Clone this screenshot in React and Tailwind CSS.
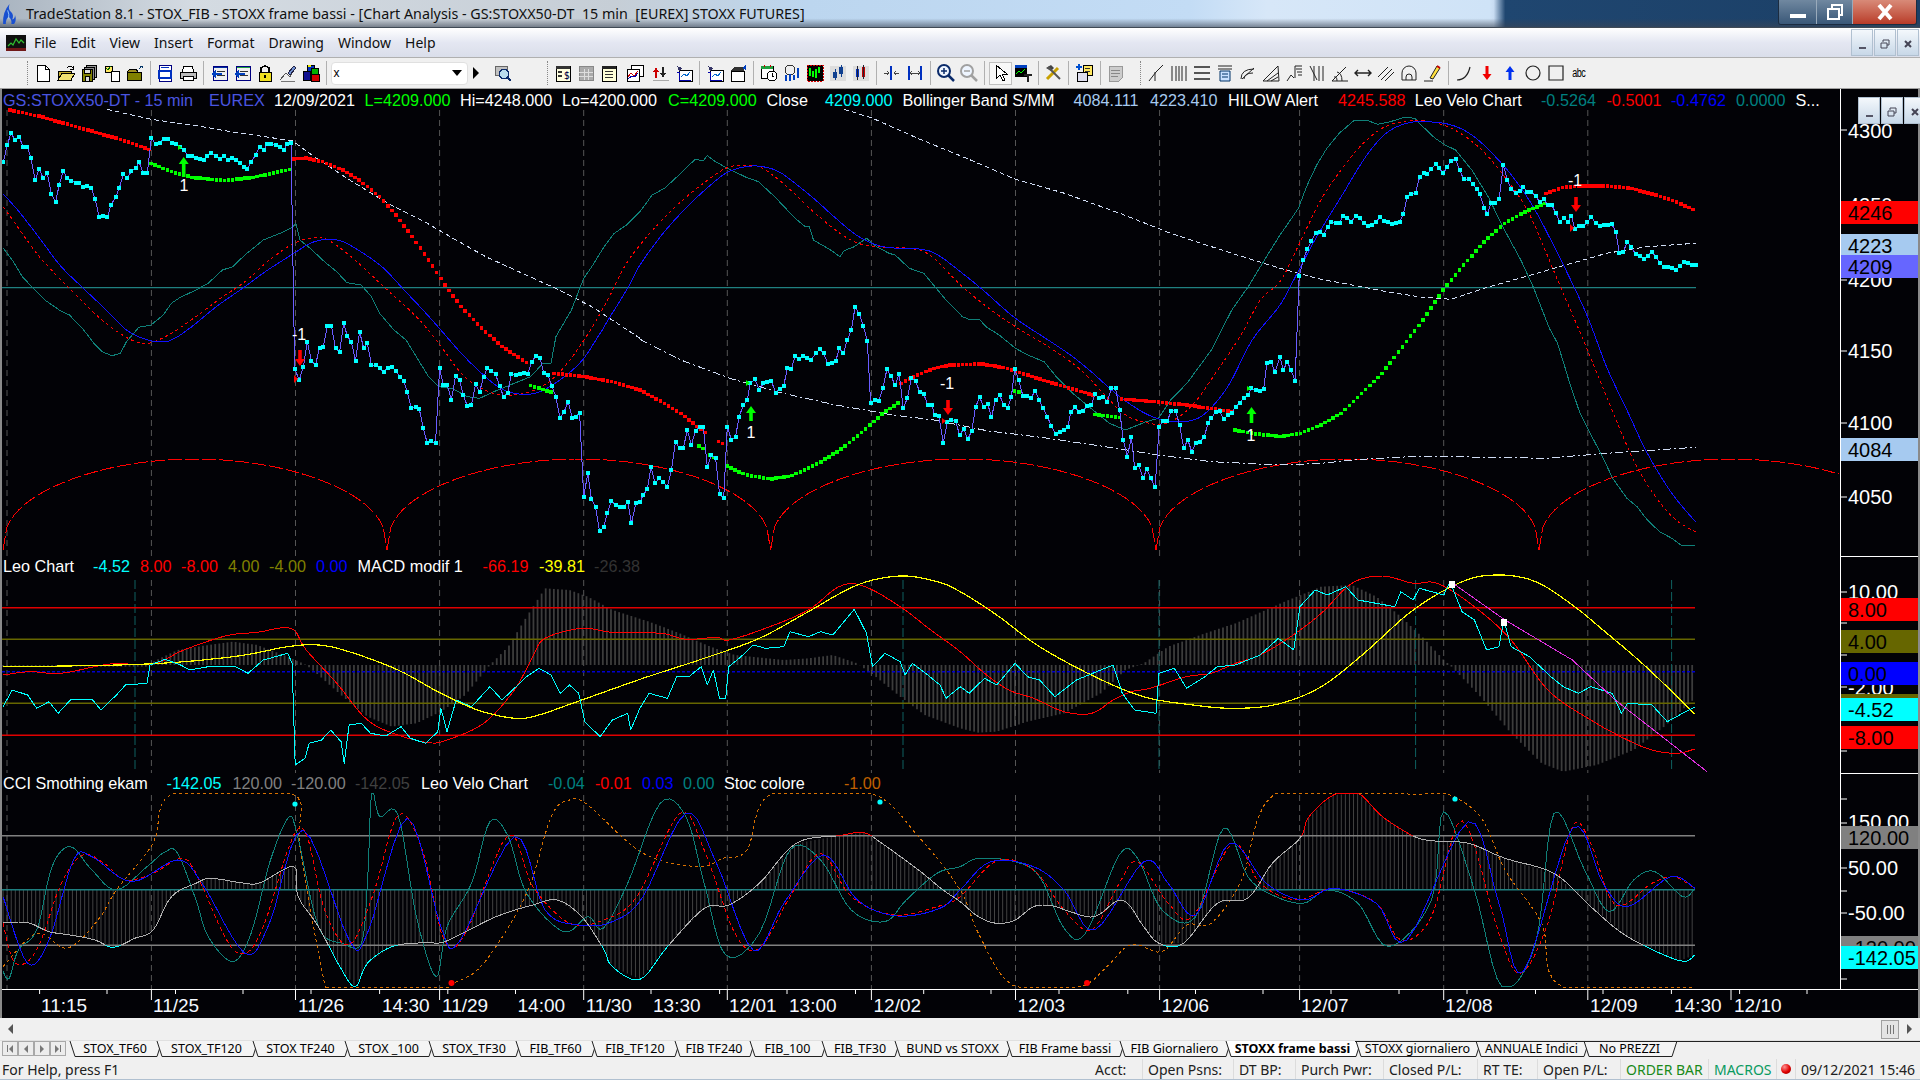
import React from 'react';

// crop coordinates -> page coordinates
const pts = (x0, sx, y0, str) =>
  str.trim().split(/\s+/).map((p) => {
    const [a, b] = p.split(',').map(Number);
    return [x0 + a / sx, y0 + b / 3];
  });
const p1 = (x0, str) => pts(x0, 2.45, 90, str);
const p2 = (x0, str) => pts(x0, 1.633, 550, str);
const join = (...a) => a.flat();
const ptStr = (a) => a.map((p) => p[0].toFixed(1) + ',' + p[1].toFixed(1)).join(' ');

const sample = (line, step) => {
  const out = [];
  let i = 0;
  for (let x = line[0][0]; x <= line[line.length - 1][0]; x += step) {
    while (i < line.length - 2 && line[i + 1][0] < x) i++;
    const [ax, ay] = line[i];
    const [bx, by] = line[i + 1];
    const t = bx === ax ? 0 : (x - ax) / (bx - ax);
    out.push([x, ay + (by - ay) * t]);
  }
  return out;
};

// catmull-rom, the averages are round curves in the picture
const smooth = (l, n = 6) => {
  const out = [];
  for (let i = 0; i < l.length - 1; i++) {
    const a = l[Math.max(i - 1, 0)];
    const b = l[i];
    const c = l[i + 1];
    const d = l[Math.min(i + 2, l.length - 1)];
    for (let k = 0; k < n; k++) {
      const t = k / n;
      const f = (j) =>
        0.5 * (2 * b[j] + (c[j] - a[j]) * t + (2 * a[j] - 5 * b[j] + 4 * c[j] - d[j]) * t * t + (3 * b[j] - a[j] - 3 * c[j] + d[j]) * t * t * t);
      out.push([f(0), f(1)]);
    }
  }
  out.push(l[l.length - 1]);
  return out;
};
// the oscillators are flat at their limits, the spline must not overshoot them
const clampY = (l, lo, hi) => l.map(([x, y]) => [x, Math.min(hi, Math.max(lo, y))]);

const price = join(
  p1(0, `8,215 18,165 27,130 37,150 47,142 57,170 67,172 76,205 86,270 96,238 106,265 116,250 126,312 136,337 145,285 155,243 165,265 175,272 185,278 194,280 204,292 214,287 224,295 233,328 243,380 253,378 263,382 272,345 283,322 292,295 302,253 312,265 322,243 332,235 341,217 351,250 361,250 371,143 381,162 391,158 401,148 411,146 421,158 431,162 441,172 450,180 460,197 470,197 480,204 490,207 500,210 508,198 518,190 528,197 538,208 548,198 558,210 568,205 578,210 588,220 598,230 606,238 616,215 626,195 636,172 646,180 655,163 665,163 675,165 685,172 695,180 703,163 713,158 722,836 733,870 743,832 753,755 763,812 773,825 783,773 792,772 802,708 812,708 822,775 832,787 842,700 851,738 861,755 871,812 881,725 891,775 900,758 910,825 920,825 930,835 940,845 950,833 960,830 970,843 979,860 989,872 998,905 1008,955 1018,950 1027,956 1037,1015 1047,1060 1057,1053 1067,1060 1077,835 1086,885 1096,885 1106,930 1116,858 1126,870 1135,915 1145,948 1155,945 1165,883 1175,905 1185,860 1194,835 1204,842 1214,853 1224,887 1234,922 1244,908 1253,853 1263,855 1273,852 1283,850 1293,852 1303,815 1313,797 1323,803 1332,848 1342,855 1352,887 1362,920 1372,985 1382,965 1392,935 1402,985 1412,980 1420,968 1430,1220 1440,1150 1449,1228 1459,1250 1469,1323 1479,1312 1488,1270 1498,1232 1508,1245 1518,1250 1528,1250 1538,1235 1547,1300 1558,1240`),
  p1(640, `0,1235 8,1215 18,1198 27,1130 37,1180 47,1165 57,1175 67,1190 77,1140 87,1055 97,1075 106,1075 116,1020 126,1065 136,1022 146,1010 155,1010 165,1132 175,1095 185,1103 195,1212 205,1225 214,1010 224,1050 234,1040 243,980 253,945 263,930 270,880 282,868 292,900 302,880 312,875 322,872 332,908 342,897 352,888 361,835 371,838 380,797 390,807 400,797 410,803 420,810 430,790 440,778 450,790 460,822 470,820 480,812 488,775 498,790 508,750 518,720 527,650 537,672 547,708 557,752 565,940 575,930 585,932 595,895 605,838 615,858 625,885 635,853 645,955 655,925 665,865 675,873 685,905 695,912 705,945 715,945 722,975 732,977 743,1060 753,995 763,990 773,992 783,1035 793,1017 803,1047 813,1022 822,952 832,922 842,950 852,942 861,982 871,930 881,915 891,945 901,955 910,920 918,838 928,870 938,918 948,918 958,925 968,902 978,930 988,955 998,980 1008,1008 1018,1033 1028,1025 1038,1020 1048,1010 1056,965 1066,952 1076,965 1086,962 1096,948 1106,945 1115,912 1125,925 1135,920 1145,935 1155,895 1165,895 1175,960 1184,1050 1194,1100 1204,1042 1212,1135 1222,1125 1232,1165 1242,1138 1252,1165 1262,1192 1272,1010 1282,992 1292,992 1302,962 1312,962 1322,1005 1332,1075 1342,1050 1352,1085 1362,1060 1372,1055 1382,1042 1392,998 1400,985 1410,965 1420,962 1430,988 1440,975 1450,968 1459,950 1469,938 1479,925 1489,915 1498,895 1508,900 1518,902 1528,897 1536,820 1546,815 1556,847`),
  p1(1280, `0,800 8,840 18,815 27,840 37,873 47,557 57,510 67,477 77,453 87,430 97,425 107,435 117,410 126,395 136,398 146,398 155,378 165,385 175,395 185,378 195,385 205,398 215,408 225,405 235,395 245,382 255,392 265,395 275,402 285,398 293,395 302,373 312,320 322,312 332,308 342,262 352,250 361,252 371,238 381,222 390,235 400,250 410,230 420,212 430,208 440,240 450,268 462,268 472,283 482,298 490,313 500,353 508,372 517,340 527,340 537,327 547,225 557,270 567,297 577,308 587,303 596,290 606,305 616,305 626,318 636,335 646,328 656,345 666,345 676,370 686,395 696,385 706,395 714,377 722,417 733,408 743,408 753,397 763,380 773,400 783,408 793,405 803,405 813,403 823,425 831,488 841,485 851,455 861,470 871,493 881,497 891,508 901,497 911,485 921,500 930,518 940,530 950,530 960,535 970,540 980,528 990,517 1000,520 1010,525 1018,525`)
);

const teal1 = join(
  p1(0, `8,475 30,510 55,560 85,600 110,630 145,660 170,675 205,720 230,760 250,785 275,797 295,790 310,755 340,712 370,705 400,675 420,640 440,623 480,600 510,580 545,540 570,530 600,495 645,450 690,428 716,412 725,400 735,450 760,475 795,515 825,545 850,578 885,585 910,620 930,670 965,720 995,750 1020,800 1050,860 1075,890 1110,897 1145,920 1175,925 1210,905 1260,880 1300,860 1330,820 1350,820 1362,740 1400,660 1430,565 1450,530 1480,470 1505,430 1535,405 1568,365`),
  p1(640, `30,315 60,295 100,250 135,208 155,212 165,197 185,215 210,232 260,262 290,275 330,320 380,385 405,410 415,410 425,450 470,482 490,500 500,482 525,470 555,445 580,470 610,490 625,495 660,535 695,550 750,630 790,680 810,690 830,687 850,712 880,735 920,775 950,795 990,815 1020,860 1060,910 1100,950 1150,1000 1190,1020 1240,995 1270,985 1300,930 1340,880 1400,780 1450,660 1490,590 1540,490 1568,435`),
  p1(1280, `20,400 45,355 65,290 90,225 115,175 145,130 180,93 215,92 240,103 270,95 305,82 330,85 350,110 380,145 405,165 430,180 470,240 510,320 550,420 590,510 620,590 660,715 680,760 710,880 735,970 760,1030 790,1100 815,1165 850,1225 875,1250 900,1290 930,1325 960,1345 985,1367 1018,1365`)
);
const blue1 = join(
  p1(0, `8,312 50,370 100,450 150,530 200,590 260,660 310,720 350,745 385,755 420,750 470,710 530,650 600,590 650,545 720,490 760,460 800,448 840,455 890,490 940,535 990,600 1040,665 1080,720 1130,790 1180,850 1220,890 1260,910 1310,910 1360,880 1420,820 1460,750 1500,670 1540,590 1568,525`),
  p1(640, `50,440 100,370 150,310 210,250 260,230 300,230 340,245 380,280 430,330 480,385 530,435 580,465 630,475 690,478 730,495 790,550 840,600 920,685 1000,750 1060,800 1110,850 1170,915 1230,965 1280,990 1330,995 1380,975 1440,890 1500,750 1568,645`),
  p1(1280, `40,555 90,440 150,320 210,200 260,130 310,100 360,95 420,105 470,135 520,190 570,260 620,350 680,490 750,670 800,830 850,960 900,1090 960,1210 1018,1295`)
);
const red1 = join(
  p1(0, `8,350 40,405 90,490 130,545 190,620 250,690 300,735 340,758 370,758 420,730 480,680 540,625 600,575 660,510 720,460 760,445 800,448 860,500 940,590 1020,680 1075,760 1130,850 1180,895 1230,915 1300,905 1360,860 1420,770 1480,650 1530,530 1568,465`),
  p1(640, `50,395 100,335 150,285 210,235 260,225 300,235 360,290 420,360 490,430 540,462 600,472 660,475 710,495 790,590 860,660 920,710 1000,770 1080,840 1150,930 1190,975 1240,998 1290,1000 1350,950 1410,850 1470,740 1520,630 1568,575`),
  p1(1280, `40,480 100,330 150,240 200,165 250,115 300,95 350,92 420,115 490,175 550,260 610,370 680,570 750,770 810,950 870,1120 920,1220 970,1290 1018,1325`)
);
const bandA = p1(0, `262,58 370,88 470,105 590,130 716,152 770,200 850,265 950,340 1040,395 1110,445 1190,500 1280,550 1370,600 1450,650 1568,745`);
const bandB = join(
  p1(640, `500,58 570,85 680,145 800,205 920,268 1040,310 1180,372 1300,430 1450,490 1568,535`),
  p1(1280, `100,568 200,590 260,605 350,622 420,628 500,595 600,560 700,525 800,490 900,470 1018,460`)
);
const bandC = join(
  p1(640, `0,748 100,810 220,865 350,910 480,945 620,975 720,990 850,1022 1000,1045 1150,1072 1270,1095 1400,1115 1568,1125`),
  p1(1280, `100,1120 200,1108 350,1098 500,1102 650,1105 800,1090 1018,1072`)
);

const redDots = [
  p1(0, `25,60 100,80 200,115 300,150 365,178`),
  p1(0, `720,207 750,204 790,215 840,240 880,270 930,320 970,375 1010,440 1050,510 1090,585 1130,650 1180,715 1230,770 1295,822`),
  join(p1(0, `1358,850 1430,860 1500,875 1568,900`), p1(640, `60,940 100,970 135,1005 165,1032`)),
  p1(640, `192,1055 205,1062`),
  p1(640, `640,880 680,855 720,835 760,825 840,822 900,835 960,860 1040,890 1110,915`),
  p1(640, `1180,927 1260,935 1340,945 1450,965`),
  p1(1280, `652,310 690,293 740,288 800,288 860,295 920,315 970,335 1018,362`),
];
const greenDots = [
  p1(0, `370,220 420,245 470,262 550,272 620,262 716,237`),
  p1(0, `1300,887 1352,907`),
  p1(640, `145,1068 158,1078`),
  p1(640, `172,1095 185,1105`),
  p1(640, `213,1128 260,1155 320,1167 370,1158 430,1125 490,1080 550,1020 600,965 635,938`),
  p1(640, `918,903 932,907`),
  p1(640, `1115,973 1175,982`),
  join(p1(640, `1458,1020 1500,1030 1568,1040`), p1(1280, `50,1030 100,1005 150,970 200,910 250,850 300,770 350,690 400,600 450,525 500,455 550,400 600,365 650,340`)),
];

const hist2 = join(
  p2(0, `5,350 240,350 250,335 290,300 340,285 380,275 420,285 470,320 500,345 520,375 560,440 600,500 640,530 680,520 720,485 760,435 800,345 830,290 860,200 890,115 930,120 960,140 1000,180 1060,215 1110,250 1160,290 1200,315 1280,330 1320,325 1360,315 1400,340 1430,380 1470,440 1510,495 1568,535`),
  p2(960, `30,548 60,545 110,515 170,490 230,430 270,360 300,340 340,290 400,250 450,220 530,155 590,110 640,105 680,140 720,200 760,270 790,330 800,345 850,440 900,550 950,640 985,665 1040,645 1100,600 1150,530 1200,445`)
);
const red2 = join(
  p2(0, `5,375 50,365 100,370 180,342 250,342 300,300 370,257 420,247 475,235 500,300 550,400 600,510 650,555 700,578 730,570 790,520 840,420 870,320 890,265 950,235 1000,247 1080,250 1120,268 1170,262 1190,270 1250,235 1320,180 1370,110 1410,108 1470,170 1520,240 1568,305`),
  p2(960, `40,370 80,420 120,445 170,485 215,490 250,450 280,425 310,415 370,380 410,370 450,340 490,315 540,260 590,190 640,100 690,78 740,100 780,100 840,170 900,270 960,420 1030,510 1090,570 1130,600 1170,610 1200,597`)
);
const yellow2 = join(
  p2(0, `5,350 140,347 240,342 320,332 400,315 470,290 520,285 570,305 650,360 720,430 780,480 840,505 880,495 950,450 1050,385 1150,325 1240,265 1320,185 1400,105 1470,78 1530,95 1568,125`),
  p2(960, `60,195 130,290 220,380 300,440 380,465 450,475 520,462 590,410 660,310 740,180 820,95 880,75 940,95 1000,165 1050,240 1120,350 1200,492`)
);
const cyan2 = join(
  p2(0, `5,470 20,420 45,435 60,475 80,455 95,490 115,450 150,447 165,480 190,435 205,405 240,400 245,345 270,328 295,345 310,360 340,350 385,350 405,370 430,330 470,310 477,340 482,645 498,625 505,580 525,570 540,540 557,575 562,640 570,525 590,520 605,550 630,558 655,530 670,565 695,580 715,545 720,475 730,545 745,450 770,470 800,410 820,450 860,380 880,355 900,375 915,430 930,405 945,430 955,515 980,560 1000,510 1025,490 1030,540 1045,475 1060,430 1090,445 1105,380 1125,380 1145,350 1155,405 1165,360 1175,445 1185,445 1190,350 1210,320 1230,285 1250,295 1280,290 1290,245 1320,260 1340,245 1360,255 1395,178 1415,250 1425,350 1445,310 1470,335 1478,375 1490,340 1515,375 1535,405 1545,445 1568,410`),
  p2(960, `15,430 40,385 60,405 90,340 110,380 130,390 155,440 190,390 250,345 265,430 285,480 320,490 325,370 350,355 370,415 400,380 420,350 450,345 490,315 520,265 545,300 555,170 580,120 600,135 630,110 650,150 710,170 720,125 740,150 750,115 790,135 800,95 820,185 840,210 860,300 880,290 888,210 900,290 930,320 965,380 985,410 1010,430 1030,410 1065,430 1080,490 1090,460 1130,465 1155,515 1190,480 1200,472`)
);

const cci = join(
  p2(0, `5,1118 45,1118 80,1145 115,1155 155,1170 185,1192 220,1165 250,1140 280,1040 320,1000 345,985 400,1000 425,998 480,950 487,1040 520,1130 555,1250 580,1310 600,1240 640,1190 690,1178 720,1178 750,1155 810,1100 870,1065 910,1050 950,1100 985,1195 1000,1250 1045,1288 1090,1190 1150,1075 1190,1065 1240,1000 1300,880 1370,857 1410,848 1440,880 1500,960 1540,1020 1568,1055`),
  p2(960, `30,1100 60,1120 90,1110 120,1070 150,1067 180,1085 220,1100 265,1050 300,1130 325,1180 365,1180 420,1060 470,1045 510,940 555,865 570,800 610,735 650,730 690,800 740,858 770,872 830,880 890,925 970,970 1030,1070 1090,1160 1175,1232 1200,1215`)
);
const teal3 = join(
  p2(0, `5,1265 15,1285 30,1200 60,1140 85,950 115,890 150,960 190,1020 240,950 270,905 290,910 320,1050 340,1160 380,1235 410,1150 440,940 470,805 485,850 520,1130 560,1180 590,1180 600,1000 607,730 620,800 650,795 680,1100 712,1280 730,1130 770,1000 800,815 830,860 860,1030 920,1145 960,1100 985,1135 1025,1000 1078,760 1120,800 1150,1000 1185,1215 1240,1150 1290,900 1340,930 1390,1080 1445,1115 1480,1050 1530,970 1568,950`),
  p2(960, `30,925 90,935 130,980 170,1135 205,1150 260,915 290,925 330,1080 385,1100 430,835 470,980 510,1035 560,1060 600,1020 650,1060 700,1190 770,1050 790,785 840,1020 885,1310 940,1180 970,790 1020,960 1060,1085 1100,990 1135,965 1180,1040 1200,1015`)
);
const red3 = join(
  p2(0, `5,1120 25,1240 60,1200 100,1000 135,915 170,940 205,990 250,970 295,925 320,970 370,1170 400,1210 430,1130 490,830 530,1080 570,1185 610,1030 650,795 690,900 725,1170 760,1150 830,855 870,1010 930,1120 985,1110 1040,1040 1110,790 1150,900 1200,1150 1240,1195 1290,1040 1340,910 1390,1040 1460,1095 1530,1070 1568,1040`),
  p2(960, `60,932 120,960 170,1080 215,1140 260,1000 290,935 340,1060 380,1100 445,880 490,1000 550,1050 610,1015 680,1060 720,1170 770,1100 820,812 880,1150 915,1270 960,1120 1000,830 1030,880 1070,1065 1130,1000 1165,980 1200,1015`)
);
const blue3 = join(
  p2(0, `5,1040 45,1240 80,1170 120,930 150,920 215,995 290,930 330,1000 400,1210 440,1120 495,840 570,1170 600,1150 665,805 720,1130 750,1175 840,860 890,1080 945,1125 1000,1115 1050,1040 1120,790 1170,940 1230,1200 1280,1060 1345,915 1400,1050 1465,1098 1535,1075 1568,1020`),
  p2(960, `50,935 120,950 170,1020 220,1140 300,935 340,1000 385,1095 440,880 500,1000 560,1050 610,1015 680,1060 730,1170 830,815 880,1060 920,1265 1000,835 1050,1000 1090,1070 1160,980 1200,1015`)
);
const orange3 = join(
  p2(0, `5,1250 60,1150 110,1195 160,1110 190,1020 250,880 285,728 475,728 490,900 530,1300 545,1312 720,1312 740,1300 790,1240 860,1030 900,800 930,750 960,765 1050,910 1140,950 1180,925 1220,900 1260,730 1420,728 1500,860 1568,1020`),
  p2(960, `30,1150 85,1305 180,1312 210,1300 240,1250 280,1183 330,1205 370,1125 410,1120 460,990 515,730 700,728 745,735 790,728 850,800 890,960 950,1120 985,1312 1200,1312`)
);

const DAYS = [7, 151.4, 295.5, 439.6, 583.7, 727.3, 871.4, 1015.5, 1159.6, 1299.6, 1443.7, 1587.8];

const Line = ({ p, c, w = 1, d }) => (
  <polyline points={ptStr(p)} fill="none" stroke={c} strokeWidth={w} strokeDasharray={d} strokeLinejoin="round" shapeRendering="crispEdges" />
);
const Squares = ({ p, c, s = 4 }) => (
  <g fill={c} shapeRendering="crispEdges">
    {p.map((q, i) => (
      <rect key={i} x={q[0] - s / 2} y={q[1] - s / 2} width={s} height={s} />
    ))}
  </g>
);
const Bars = ({ line, base, c, w, step = 4.08 }) => (
  <g stroke={c} strokeWidth={w}>
    {sample(line, step).map((q, i) => (
      <line key={i} x1={q[0]} x2={q[0]} y1={base} y2={q[1]} />
    ))}
  </g>
);
const HLine = ({ y, c, d, w = 1.5 }) => <line x1="2" x2="1695" y1={y} y2={y} stroke={c} strokeWidth={w} strokeDasharray={d} />;
const DayLines = ({ top, bottom }) => (
  <g stroke="#555" strokeDasharray="6 4">
    {DAYS.map((x) => (
      <line key={x} x1={x} x2={x} y1={top} y2={bottom} />
    ))}
  </g>
);
const Up = ({ x, y0, y1 }) => <polygon fill="#00ff00" points={`${x},${y0} ${x + 5},${y0 + 7} ${x + 1.8},${y0 + 7} ${x + 1.8},${y1} ${x - 1.8},${y1} ${x - 1.8},${y0 + 7} ${x - 5},${y0 + 7}`} />;
const Down = ({ x, y0, y1 }) => <polygon fill="#ff0000" points={`${x},${y1} ${x + 5},${y1 - 7} ${x + 1.8},${y1 - 7} ${x + 1.8},${y0} ${x - 1.8},${y0} ${x - 1.8},${y1 - 7} ${x - 5},${y1 - 7}`} />;
const Lbl = ({ x, y, children }) => (
  <text x={x} y={y} fill="#fff" fontSize="16" textAnchor="middle">
    {children}
  </text>
);

// long arches along the bottom of the price pane
const arch = (x0, x1, from = 0, to = 1) => {
  const out = [];
  for (let t = from; t <= to + 0.0001; t += 0.01) {
    out.push([x0 + (x1 - x0) * t, 459 + 91 * (1 - Math.pow(Math.sin(Math.PI * Math.min(t, 1)), 0.4))]);
  }
  return out;
};

function PricePlot() {
  return (
    <svg viewBox="2 89 1838 467" className="block w-[1838px] h-[467px]">
      <DayLines top={110} bottom={556} />
      <line x1="2" x2="1696" y1="287.7" y2="287.7" stroke="#1f8080" strokeWidth="1.2" />
      {[[3, 387], [387, 770.6], [770.6, 1156], [1156, 1539]].map(([a, b]) => (
        <Line key={a} p={arch(a, b)} c="#ff0000" d="14 3" />
      ))}
      <Line p={arch(1539, 1923, 0, 0.78)} c="#ff0000" d="14 3" />
      <Line p={bandA} c="#d0dcf4" d="5 3" />
      <Line p={bandB} c="#d0dcf4" d="5 3" />
      <Line p={bandC} c="#d0dcf4" d="8 3 2 3" />
      <Line p={teal1} c="#0f8078" />
      <Line p={smooth(red1)} c="#ff0000" d="3 3" />
      <Line p={smooth(blue1)} c="#1010ff" />
      {redDots.map((l, i) => (
        <Squares key={i} p={sample(l, 4.08)} c="#ff0000" s={3.6} />
      ))}
      {greenDots.map((l, i) => (
        <Squares key={i} p={sample(l, 4.08)} c="#00ff00" s={3.6} />
      ))}
      <Line p={price} c="#6a5cff" />
      <Squares p={price} c="#00ffff" />
      <Up x={183.7} y0={157} y1={177} />
      <Up x={751} y0={406} y1={421} />
      <Up x={1251.5} y0={407} y1={423} />
      <Down x={300} y0={350} y1={366} />
      <Down x={948} y0={400} y1={415} />
      <Down x={1576} y0={197} y1={212} />
      <polygon fill="#00ff00" points="178,145 182,147.5 178,150" />
      <polygon fill="#00ff00" points="746,380 750,383 746,386" />
      <polygon fill="#00ff00" points="1247,386 1251,388.5 1247,391" />
      <polygon fill="#ff0000" points="294,375 298,379 294,383" />
      <polygon fill="#ff0000" points="942,418 946,421 942,424" />
      <polygon fill="#ff0000" points="1570,224 1574,228 1570,232" />
      <Lbl x={184} y={191}>1</Lbl>
      <Lbl x={751} y={438}>1</Lbl>
      <Lbl x={1251} y={441}>1</Lbl>
      <Lbl x={299} y={340}>-1</Lbl>
      <Lbl x={947} y={389}>-1</Lbl>
      <Lbl x={1575} y={186}>-1</Lbl>
    </svg>
  );
}

function MacdPlot() {
  return (
    <svg viewBox="2 556 1838 217" className="block w-[1838px] h-[217px]">
      <Bars line={hist2} base={665} c="#3c3c3c" w={1.8} />
      <DayLines top={580} bottom={773} />
      <g stroke="#0f6060" strokeDasharray="9 3">
        {[135, 903, 1159, 1415.6, 1671.6].map((x) => (
          <line key={x} x1={x} x2={x} y1="580" y2="770" />
        ))}
      </g>
      <HLine y={607.7} c="#e00000" />
      <HLine y={639.3} c="#666600" />
      <HLine y={671.7} c="#0000d0" d="3 2" />
      <HLine y={703.3} c="#666600" />
      <HLine y={735.3} c="#e00000" />
      <Line p={smooth(red2)} c="#ff0000" />
      <Line p={smooth(yellow2)} c="#ffff00" w={1.2} />
      <Line p={cyan2} c="#00ffff" />
      <Line p={p2(960, '805,100 890,210 1000,330 1070,450 1220,665')} c="#e030e0" />
      <rect x="1449" y="581" width="6" height="7" fill="#fff" />
      <rect x="1501" y="619" width="6" height="7" fill="#fff" />
    </svg>
  );
}

function CciPlot() {
  const line = clampY(smooth(cci), 793, 987);
  return (
    <svg viewBox="2 773 1838 216" className="block w-[1838px] h-[216px]">
      <defs>
        <clipPath id="cciTop"><rect x="0" y="773" width="1840" height="62.7" /></clipPath>
        <clipPath id="cciLow"><rect x="0" y="945.3" width="1840" height="50" /></clipPath>
      </defs>
      <Bars line={cci} base={889.7} c="#4a4a4a" w={0.9} />
      <DayLines top={795} bottom={989} />
      <HLine y={835.7} c="#808080" />
      <HLine y={889.7} c="#1f8080" />
      <HLine y={945.3} c="#808080" />
      <Line p={clampY(smooth(orange3), 793, 987.5)} c="#d87000" d="3 3" />
      <Line p={clampY(smooth(teal3), 793, 987)} c="#0f8078" />
      <Line p={clampY(smooth(red3), 800, 987)} c="#ff0000" d="4 3" />
      <Line p={clampY(smooth(blue3), 800, 987)} c="#1010ff" />
      <Line p={line} c="#b0b0b0" />
      <g clipPath="url(#cciTop)"><Line p={line} c="#ff0000" /></g>
      <g clipPath="url(#cciLow)"><Line p={line} c="#00ffff" /></g>
      <circle cx="295" cy="804" r="2.6" fill="#00ffff" />
      <circle cx="880" cy="802" r="2.6" fill="#00ffff" />
      <circle cx="1455" cy="799" r="2.6" fill="#00ffff" />
      <circle cx="451.5" cy="983" r="3" fill="#ff0000" />
      <circle cx="1087" cy="983" r="3" fill="#ff0000" />
    </svg>
  );
}

const AxText = ({ y, c = '#fff', children }) => (
  <text x="1848" y={y + 7} fill={c} fontSize="20">
    {children}
  </text>
);
const AxBox = ({ y0, y1, bg, children }) => (
  <g>
    <rect x="1841" y={y0} width="78" height={y1 - y0} fill={bg} />
    <text x="1848" y={y0 + 18.5} fill="#000" fontSize="20">
      {children}
    </text>
  </g>
);
const Ticks = ({ ys }) => (
  <g stroke="#fff">
    {ys.map((y) => (
      <line key={y} x1="1840" x2="1847" y1={y} y2={y} />
    ))}
  </g>
);

function PriceAxis() {
  return (
    <svg viewBox="1840 89 78 467" className="block w-[78px] h-[467px] bg-[#020206]">
      <line x1="1840.5" x2="1840.5" y1="89" y2="556" stroke="#fff" />
      <Ticks ys={[130, 205, 280, 351, 423, 497]} />
      <AxText y={131}>4300</AxText>
      <AxText y={205}>4250</AxText>
      <AxText y={280}>4200</AxText>
      <AxText y={351}>4150</AxText>
      <AxText y={423}>4100</AxText>
      <AxText y={497}>4050</AxText>
      <AxBox y0={201} y1={224} bg="#ff0000">4246</AxBox>
      <AxBox y0={234} y1={255} bg="#a6caf0">4223</AxBox>
      <AxBox y0={255} y1={278} bg="#6666ff">4209</AxBox>
      <AxBox y0={438} y1={461} bg="#a6caf0">4084</AxBox>
    </svg>
  );
}

function MacdAxis() {
  return (
    <svg viewBox="1840 556 78 217" className="block w-[78px] h-[217px] bg-[#020206]">
      <line x1="1840.5" x2="1840.5" y1="556" y2="773" stroke="#fff" />
      <line x1="1840" x2="1918" y1="556.5" y2="556.5" stroke="#fff" />
      <Ticks ys={[592, 623, 655, 687, 751]} />
      <AxText y={592}>10.00</AxText>
      <AxText y={688}>-2.00</AxText>
      <AxBox y0={598} y1={621} bg="#ff0000">8.00</AxBox>
      <AxBox y0={630} y1={653} bg="#666600">4.00</AxBox>
      <AxBox y0={662} y1={685} bg="#0000ff">0.00</AxBox>
      <rect x="1841" y="694" width="78" height="5" fill="#666600" />
      <AxBox y0={698} y1={721} bg="#00ffff">-4.52</AxBox>
      <AxBox y0={726} y1={749} bg="#ff0000">-8.00</AxBox>
    </svg>
  );
}

function CciAxis() {
  return (
    <svg viewBox="1840 773 78 216" className="block w-[78px] h-[216px] bg-[#020206]">
      <line x1="1840.5" x2="1840.5" y1="773" y2="989" stroke="#fff" />
      <line x1="1840" x2="1918" y1="773.5" y2="773.5" stroke="#fff" />
      <Ticks ys={[799, 823, 868, 891, 913, 979]} />
      <AxText y={822}>150.00</AxText>
      <AxText y={868}>50.00</AxText>
      <AxText y={913}>-50.00</AxText>
      <AxBox y0={826} y1={849} bg="#808080">120.00</AxBox>
      <AxBox y0={936} y1={959} bg="#808080">-120.00</AxBox>
      <AxBox y0={946} y1={969} bg="#00ffff">-142.05</AxBox>
    </svg>
  );
}

const TIME_LABELS = [
  [41, '11:15'], [153, '11/25'], [298, '11/26'], [382, '14:30'], [442, '11/29'], [517.5, '14:00'], [585.7, '11/30'],
  [653, '13:30'], [729, '12/01'], [789, '13:00'], [873.5, '12/02'], [1017.5, '12/03'], [1161.6, '12/06'], [1301, '12/07'],
  [1445, '12/08'], [1590, '12/09'], [1674, '14:30'], [1734, '12/10'],
];
const SHORT = [39.6, 107, 175.5, 243, 311, 379.6, 447.8, 515.5, 651, 719.6, 787, 855.5, 923.7, 991, 1059, 1127.8, 1195.5, 1263, 1331, 1399, 1467, 1535.5, 1603, 1671.4, 1739.6, 1807];
const TALL = [151.4, 295.5, 439.6, 583.7, 727.3, 871.4, 1015.5, 1159.6, 1299.6, 1443.7, 1587.8, 1731];

function TimeAxis() {
  return (
    <svg viewBox="2 989 1916 29" className="block w-[1916px] h-[29px]">
      <line x1="2" x2="1918" y1="989.5" y2="989.5" stroke="#fff" />
      <g stroke="#fff">
        {SHORT.map((x) => (
          <line key={x} x1={x} x2={x} y1="989" y2="994" />
        ))}
        {TALL.map((x) => (
          <line key={x} x1={x} x2={x} y1="989" y2="1000" />
        ))}
      </g>
      {TIME_LABELS.map(([x, t], i) => (
        <text key={i} x={x} y="1012" fill="#f4f8ff" fontSize="19">
          {t}
        </text>
      ))}
    </svg>
  );
}

const LEG1 = [
  ['GS:STOXX50-DT - 15 min', 'w-[206px] text-[#4a55e0]'],
  ['EUREX', 'w-[65px] text-[#4a55e0]'],
  ['12/09/2021', 'w-[90.5px] text-white'],
  ['L=4209.000', 'w-[95.5px] text-[#00ff00]'],
  ['Hi=4248.000', 'w-[102px] text-white'],
  ['Lo=4200.000', 'w-[106px] text-white'],
  ['C=4209.000', 'w-[98.5px] text-[#00ff00]'],
  ['Close', 'w-[58.5px] text-white'],
  ['4209.000', 'w-[77.5px] text-[#00ffff]'],
  ['Bollinger Band S/MM', 'w-[171px] text-white'],
  ['4084.111', 'w-[76.5px] text-[#a6caf0]'],
  ['4223.410', 'w-[78px] text-[#a6caf0]'],
  ['HILOW Alert', 'w-[110px] text-white'],
  ['4245.588', 'w-[76.7px] text-[#ff0000]'],
  ['Leo Velo Chart', 'w-[126.3px] text-white'],
  ['-0.5264', 'w-[65.5px] text-[#008080]'],
  ['-0.5001', 'w-[64.5px] text-[#ff0000]'],
  ['-0.4762', 'w-[65px] text-[#0000ff]'],
  ['0.0000', 'w-[59.5px] text-[#008080]'],
  ['S...', 'text-white'],
];
const LEG2 = [
  ['Leo Chart', 'w-[90px] text-white'],
  ['-4.52', 'w-[47px] text-[#00ffff]'],
  ['8.00', 'w-[41px] text-[#ff0000]'],
  ['-8.00', 'w-[47px] text-[#ff0000]'],
  ['4.00', 'w-[41px] text-[#808000]'],
  ['-4.00', 'w-[47px] text-[#808000]'],
  ['0.00', 'w-[41.6px] text-[#0000ff]'],
  ['MACD modif 1', 'w-[125px] text-white'],
  ['-66.19', 'w-[56.5px] text-[#ff0000]'],
  ['-39.81', 'w-[55px] text-[#ffff00]'],
  ['-26.38', 'text-[#333333]'],
];
const LEG3 = [
  ['CCI Smothing ekam', 'w-[163.6px] text-white'],
  ['-142.05', 'w-[66px] text-[#00ffff]'],
  ['120.00', 'w-[58.3px] text-[#808080]'],
  ['-120.00', 'w-[64px] text-[#808080]'],
  ['-142.05', 'w-[66px] text-[#404040]'],
  ['Leo Velo Chart', 'w-[127px] text-white'],
  ['-0.04', 'w-[47px] text-[#008080]'],
  ['-0.01', 'w-[47px] text-[#ff0000]'],
  ['0.03', 'w-[41px] text-[#0000ff]'],
  ['0.00', 'w-[41px] text-[#008080]'],
  ['Stoc colore', 'w-[120px] text-white'],
  ['-1.00', 'text-[#c06000]'],
];

const Legend = ({ items, h }) => (
  <div className={`absolute left-0 top-0 flex items-center pl-[1px] text-[16.2px] whitespace-nowrap ${h}`}>
    {items.map(([t, c], i) => (
      <span key={i} className={`shrink-0 ${c}`}>
        {t}
      </span>
    ))}
  </div>
);

// toolbar glyphs
const G = ({ children }) => (
  <svg viewBox="0 0 20 20" className="w-5 h-5 block" shapeRendering="crispEdges">
    {children}
  </svg>
);
const K = '#000';
const Page = <G><path d="M4 2h8l4 4v12H4z" fill="#fff" stroke={K} /><path d="M12 2v4h4" fill="none" stroke={K} /></G>;
const Open = <G><path d="M2 8h13v9H2z" fill="#c8b030" stroke={K} /><path d="M2 17l4-7h13l-4 7z" fill="#f0e070" stroke={K} /><path d="M11 5q3-3 6 0M17 3v3h-3" fill="none" stroke={K} /></G>;
const Floppies = <G><path d="M7 2h10v12H7z" fill="#999" stroke={K} /><path d="M5 4h10v12H5z" fill="#888" stroke={K} /><path d="M3 6h10v12H3z" fill="#808000" stroke={K} /><path d="M5 6h6v4H5zM6 13h4v5H6z" fill="#ddd" stroke={K} /></G>;
const Clip = <G><path d="M3 3h7v6H3z" fill="#ffe860" stroke={K} /><path d="M4 5l2 2 3-4" fill="none" stroke="#060" /><path d="M9 8h8v10H9z" fill="#fff" stroke={K} /></G>;
const OliveBox = <G><path d="M2 9h14v8H2z" fill="#808000" stroke={K} /><path d="M2 9l3-3h6l2 3" fill="#a09020" stroke={K} /><path d="M14 6l3-3M15 3h2v2" fill="none" stroke="#036" /></G>;
const Preview = <G><path d="M4 2h12v16H4z" fill="#fff" stroke="#000080" /><path d="M4 8h12v7H4z" fill="#fff" stroke="#0030c0" strokeWidth="1.5" /><path d="M6 4h8" stroke="#0030c0" /></G>;
const Printer = <G><path d="M6 3h8l2 6H4z" fill="#fff" stroke={K} /><path d="M2 9h16v6H2z" fill="#bbb" stroke={K} /><path d="M5 13h10v4H5z" fill="#fff" stroke={K} /></G>;
const WinBack = ({ bar }) => <G><path d="M4 3h14v2H4z" fill={bar} /><path d="M4 3h14v14H4z" fill="none" stroke="#000080" /><path d="M8 8h8M8 12h8" stroke="#333" /><path d="M2 11l5-4v8z" fill="#0040c0" /><path d="M6 11h7" stroke="#0040c0" strokeWidth="2" /></G>;
const Lock = <G><path d="M6 9V5q4-4 8 0v4" fill="none" stroke={K} strokeWidth="1.5" /><path d="M4 9h12v9H4z" fill="#f0e020" stroke={K} /><path d="M9 12h2v3H9z" fill={K} /></G>;
const Hatch = <G><path d="M2 17l6-7 4 4 4-9" fill="none" stroke="#555" /><path d="M10 10l6-7 2 2-6 7z" fill="#7090d0" stroke="#224" /><path d="M3 18h14" stroke="#777" /></G>;
const Cubes = <G><path d="M6 2h7v7H6z" fill="#0030c0" stroke={K} /><path d="M10 5h7v7h-7z" fill="#00b000" stroke={K} /><path d="M2 8h7v9H2z" fill="#101090" stroke={K} /><path d="M10 11h8v7h-8z" fill="#d00000" stroke={K} /><path d="M7 2h3v2H7z" fill="#ee0" /></G>;
const Magn = <G><path d="M2 3h12v9H2z" fill="#c0c0c0" stroke="#666" /><circle cx="11" cy="11" r="4.5" fill="#bde" stroke="#0a2a6a" strokeWidth="1.5" /><path d="M14 14l4 4" stroke="#0a2a6a" strokeWidth="2" /></G>;
const Calc = <G><path d="M3 3h14v15H3z" fill="#ffffe0" stroke={K} /><path d="M3 3h14v3H3z" fill="#333" /><path d="M5 9h4M5 13h4" stroke="#333" strokeWidth="2" /><text x="11" y="16" fontSize="10" fill="#004">$</text></G>;
const GrayTbl = <G><path d="M3 3h14v14H3z" fill="#aaa" stroke="#888" /><path d="M8 6v11M12 6v11M3 9h14M3 13h14" stroke="#ddd" /></G>;
const DarkTbl = <G><path d="M3 3h14v15H3z" fill="#ffffd8" stroke={K} /><path d="M3 3h14v3H3z" fill="#222" /><path d="M6 8h8M6 11h8M6 14h8" stroke="#333" /></G>;
const Multi = <G><path d="M6 2h12v11H6z" fill="#fff" stroke={K} /><path d="M2 6h12v12H2z" fill="#fff" stroke={K} /><path d="M3 14l3-4 3 3 4-5" fill="none" stroke="#c00" /><path d="M3 16l4-3 3 1 3-4" fill="none" stroke="#00a" /></G>;
const RedUp = <G><path d="M5 15V7M3 9l2-3 2 3" fill="none" stroke="#c00" strokeWidth="1.5" /><path d="M12 4v9M10 10l2 3 2-3" fill="none" stroke="#222" strokeWidth="1.5" /><path d="M2 17h16" stroke="#aaa" /></G>;
const BoxArrow = <G><path d="M5 7h13v11H5z" fill="#fff" stroke={K} /><path d="M3 3l5 2-3 3z" fill="#336" /><path d="M7 14l3-3 3 2 3-4" fill="none" stroke="#06c" /><path d="M3 9h2v8h12" fill="none" stroke="#00a" /></G>;
const Folder2 = <G><path d="M3 8h13v10H3z" fill="#fff" stroke={K} /><path d="M3 8l3-4h10v4z" fill="#333" /><path d="M14 5l4-3v5z" fill="#0040c0" /></G>;
const Clock = <G><path d="M2 3h12v12H2z" fill="#fff" stroke={K} /><path d="M2 3h12v3H2z" fill="#20a040" /><path d="M5 2v2M11 2v2" stroke="#c00" /><circle cx="13" cy="13" r="5" fill="#fff" stroke={K} /><path d="M13 10v3h2" fill="none" stroke={K} /></G>;
const BarsMag = <G><circle cx="8" cy="7" r="5" fill="#eee" stroke="#333" /><path d="M4 18v-6M8 18v-7M12 17v-5M16 15V5" stroke="#0040c0" strokeWidth="1.5" /></G>;
const BlackChart = <G><path d="M2 2h16v16H2z" fill="#000" stroke="#d00" strokeDasharray="2 1" /><path d="M5 5v8M8 8v6M11 6v9M14 4v6" stroke="#0f0" strokeWidth="1.5" /></G>;
const BlueBars = <G><path d="M2 3h16v15H2z" fill="#ddd" /><path d="M5 9h4v6H5zM11 4h4v7h-4z" fill="#104090" /><path d="M7 6v11M13 2v12" stroke="#104090" /></G>;
const Candles = <G><path d="M2 3h16v15H2z" fill="#ddd" /><path d="M5 6h3v8H5z" fill="#0030c0" /><path d="M11 4h3v10h-3z" fill="#c00000" /><path d="M6.500 3v14M12.500 2v14" stroke="#223" /></G>;
const In = <G><path d="M9 3v14" stroke="#0030c0" strokeWidth="1.5" /><path d="M2 10h5M5 8l2 2-2 2M17 10h-5M14 8l-2 2 2 2" fill="none" stroke="#444" /></G>;
const Out = <G><path d="M4 3v14M16 3v14" stroke="#0030c0" strokeWidth="1.5" /><path d="M5 10h10M7 8l-2 2 2 2M13 8l2 2-2 2" fill="none" stroke="#444" /></G>;
const ZoomG = ({ c, plus }) => <svg viewBox="0 0 20 20" className="w-5 h-5 block"><circle cx="8" cy="8" r="6" fill="#eef5ff" stroke={c} strokeWidth="2" /><path d="M12 12l6 6" stroke={c} strokeWidth="2.5" /><path d={plus ? 'M5 8h6M8 5v6' : 'M5 8h6'} stroke={c} strokeWidth="1.5" /></svg>;
const Pointer = <G><path d="M6 2v14l4-4 3 6 2-1-3-6h5z" fill="#fff" stroke={K} /></G>;
const TChart = <G><path d="M2 2h12v12H2z" fill="#000" /><path d="M2 2h12v3H2z" fill="#0040c0" /><path d="M3 11l3-3 2 2 4-4" fill="none" stroke="#0f0" /><path d="M11 11h8v2h-3v6h-2v-6h-3z" fill="#222" /></G>;
const Hammer = <svg viewBox="0 0 20 20" className="w-5 h-5 block"><path d="M4 16L15 5" stroke="#c8a000" strokeWidth="3" /><path d="M3 5l5-3 3 3-3 3z" fill="#444" /><path d="M5 4l12 12" stroke="#555" strokeWidth="2" /></svg>;
const Plus = <G><path d="M9 2h9v10H9z" fill="#ffe860" stroke={K} /><path d="M3 9h10v9H3z" fill="#dde" stroke={K} /><path d="M5 1v6M2 4h6" stroke="#0050d0" strokeWidth="2" /><path d="M11 5h5M11 8h5" stroke="#333" /></G>;
const GrayDoc = <G><path d="M3 3h13v12l-3 3H3z" fill="#ccc" stroke="#999" /><path d="M5 7h9M5 10h9M5 13h7" stroke="#888" /></G>;
const Stroke = ({ children }) => <svg viewBox="0 0 20 20" className="w-5 h-5 block" fill="none" stroke="#222">{children}</svg>;
const D1 = <Stroke><path d="M3 18L10 9M10 9l7-7M9 18V9" /></Stroke>;
const D2 = <Stroke><path d="M3 3v15M7 3v15M10 3v15M13 3v15M17 3v15" /></Stroke>;
const D3 = <Stroke><path d="M2 4h16M2 10h16M2 16h16" strokeWidth="1.5" /></Stroke>;
const D4 = <Stroke><path d="M3 3h14M3 6h14" /><path d="M5 8h10v10H5z" fill="#c8e0ff" stroke="#036" /><path d="M7 11h6M7 14h6" stroke="#036" /></Stroke>;
const D5 = <Stroke><path d="M3 16q0-10 13-10M6 16q0-6 9-6" /><path d="M4 16L16 5" /></Stroke>;
const D6 = <Stroke><path d="M2 18h16L17 3zM6 18l11-8M10 18l7-4" /></Stroke>;
const D7 = <Stroke><path d="M3 18l4-6 3 3M11 3h7M12 6h6M13 9h5M14 12h4" /><path d="M11 15V3" /></Stroke>;
const D8 = <Stroke><path d="M3 3l7 14M7 3v15M12 3v15M16 3v15" /></Stroke>;
const D9 = <Stroke><path d="M2 18L16 4M2 18h16M7 18q0-5-3-4M12 18q0-8-5-9" /></Stroke>;
const D10 = <Stroke><path d="M2 10h16M5 7l-3 3 3 3M15 7l3 3-3 3" strokeWidth="1.4" /></Stroke>;
const D11 = <Stroke><path d="M2 14L12 4M5 17L16 6M9 18L18 9" /></Stroke>;
const D12 = <Stroke><path d="M3 17V10a7 7 0 0 1 14 0v7M7 17v-3a3 3 0 0 1 6 0v3M3 17h14" /></Stroke>;
const D13 = <Stroke><path d="M2 18h9" /><path d="M8 15l7-12 3 2-7 11z" fill="#ffe040" stroke="#222" /><path d="M15 3l3 2" stroke="#c00" strokeWidth="2" /></Stroke>;
const D14 = <Stroke><path d="M3 17q10 0 13-13" strokeWidth="1.2" /></Stroke>;
const DR = <svg viewBox="0 0 20 20" className="w-5 h-5 block"><path d="M8.500 3h3v8h3l-4.500 6-4.500-6h3z" fill="#f00000" /></svg>;
const UB = <svg viewBox="0 0 20 20" className="w-5 h-5 block"><path d="M8.500 17h3V9h3L10 3 5.500 9h3z" fill="#0030f0" /></svg>;
const Circ = <Stroke><circle cx="10" cy="10" r="7" strokeWidth="1.2" /></Stroke>;
const Sq = <Stroke><path d="M3 3h14v14H3z" strokeWidth="1.2" /></Stroke>;

const Slot = ({ children, on }) => (
  <div className={`w-[23px] h-[23px] flex items-center justify-center shrink-0 ${on ? 'bg-[#f8f8f8] border border-[#c0c0c0]' : ''}`}>{children}</div>
);
const Sep = ({ w }) => (
  <div className={`${w} h-[24px] flex justify-center shrink-0`}>
    <div className="w-px h-full bg-[#b0b0b0]" />
  </div>
);
const Grip = ({ w }) => (
  <div className={`${w} h-[24px] flex justify-center shrink-0`}>
    <div className="w-px h-full border-l border-dotted border-[#888]" />
  </div>
);

function Toolbar() {
  const g1 = [Page, Open, Floppies, Clip, OliveBox];
  const g3 = [<WinBack bar="#0030a0" />, <WinBack bar="#20a040" />, Lock, Hatch, Cubes];
  const g5 = [Calc, GrayTbl, DarkTbl];
  const g6 = [Multi, RedUp, BoxArrow];
  const d1 = [D1, D2, D3, D4, D5, D6, D7, D8, D9, D10, D11, D12, D13];
  const d2 = [D14, DR, UB, Circ, Sq];
  return (
    <div className="h-[31px] flex items-center bg-[#f0f0f0] border-b border-[#a0a0a0] text-[12px]">
      <div className="w-[24px] shrink-0" />
      <Grip w="w-[7.5px]" />
      {g1.map((g, i) => <Slot key={i}>{g}</Slot>)}
      <Sep w="w-[7px]" />
      <Slot>{Preview}</Slot>
      <Slot>{Printer}</Slot>
      <Sep w="w-[8px]" />
      {g3.map((g, i) => <Slot key={i}>{g}</Slot>)}
      <Sep w="w-[8px]" />
      <div className="w-[137px] h-[23px] shrink-0 bg-white rounded-sm border border-[#e0e0e0] flex items-center justify-between px-[2px] font-['Liberation_Sans',sans-serif]">
        <span>x</span>
        <span className="w-0 h-0 mr-[3px] border-x-[5px] border-x-transparent border-t-[6px] border-t-black" />
      </div>
      <div className="w-[17px] shrink-0 flex justify-center">
        <span className="w-0 h-0 border-y-[6px] border-y-transparent border-l-[6px] border-l-black" />
      </div>
      <div className="w-[7px] shrink-0" />
      <Slot>{Magn}</Slot>
      <div className="w-[28px] shrink-0" />
      <Grip w="w-[9px]" />
      {g5.map((g, i) => <Slot key={i}>{g}</Slot>)}
      <div className="w-[3px] shrink-0" />
      <Slot>{g6[0]}</Slot>
      <div className="w-[3px] shrink-0" />
      <Slot>{g6[1]}</Slot>
      <Slot>{g6[2]}</Slot>
      <Sep w="w-[8px]" />
      <Slot>{BoxArrow}</Slot>
      <Slot>{Folder2}</Slot>
      <Sep w="w-[8px]" />
      <Slot>{Clock}</Slot>
      <Slot>{BarsMag}</Slot>
      <Slot>{BlackChart}</Slot>
      <Slot>{BlueBars}</Slot>
      <Slot>{Candles}</Slot>
      <Sep w="w-[8px]" />
      <Slot>{In}</Slot>
      <Slot>{Out}</Slot>
      <Sep w="w-[8px]" />
      <Slot><ZoomG c="#0a2a6a" plus /></Slot>
      <Slot><ZoomG c="#a0a0a0" /></Slot>
      <Sep w="w-[8px]" />
      <Slot on>{Pointer}</Slot>
      <Slot>{TChart}</Slot>
      <Sep w="w-[7px]" />
      <Slot>{Hammer}</Slot>
      <Sep w="w-[8px]" />
      <Slot>{Plus}</Slot>
      <Sep w="w-[9px]" />
      <Slot>{GrayDoc}</Slot>
      <div className="w-[9px] shrink-0" />
      <Grip w="w-[8px]" />
      {d1.map((g, i) => <Slot key={i}>{g}</Slot>)}
      <Sep w="w-[9px]" />
      {d2.map((g, i) => <Slot key={i}>{g}</Slot>)}
      <Slot><span className="text-[12px] tracking-tighter scale-x-75 font-['Liberation_Sans',sans-serif]">abc</span></Slot>
    </div>
  );
}

const MdiButton = ({ glyph, cls }) => (
  <div className={`w-[22px] h-[27px] flex items-end justify-center pb-[6px] bg-gradient-to-b from-[#f4f8fc] to-[#c8d8e8] border border-[#b0c0d0] text-[#445566] ${cls || ''}`}>{glyph}</div>
);
const GMin = <span className="block w-[7px] h-[2px] bg-[#556]" />;
const GRest = <svg viewBox="0 0 10 10" className="w-[10px] h-[10px]" fill="none" stroke="#445"><path d="M3 3V1h6v5H7M1 4h6v5H1z" /></svg>;
const GClose = <svg viewBox="0 0 10 10" className="w-[10px] h-[10px]" stroke="#445" strokeWidth="2"><path d="M2 2l6 6M8 2l-6 6" /></svg>;

function TitleBar() {
  return (
    <div className="h-[28px] flex items-center relative border-b border-[#404a55] bg-[linear-gradient(to_bottom,transparent_68%,rgba(60,70,85,0.6)_100%),linear-gradient(to_right,#a9b4c0_0%,#d4dbe2_10%,#c6ced6_32%,#bcd6ef_42%,#c3dcf5_62%,#d7e7f8_66%,#cfe3f7_77.6%,#c8dcf2_77.8%,#1f4670_78.4%,#1b3f66_100%)]">
      <svg viewBox="0 0 16 24" className="w-[15px] h-[22px] ml-[2px] shrink-0">
        <path d="M1 23Q0 10 8 1q-2 6 2 9 3 3 1 8 3-1 3-5 2 6-1 10h-3q1-5-3-8-3 2-3 8z" fill="#1a50d0" />
        <path d="M6 8q2 4 1 9" stroke="#a0d0ff" fill="none" />
      </svg>
      <span className="ml-[9px] text-[14.3px] text-[#101010] whitespace-pre">TradeStation 8.1 - STOX_FIB - STOXX frame bassi - [Chart Analysis - GS:STOXX50-DT  15 min  [EUREX] STOXX FUTURES]</span>
      <div className="absolute right-[3px] top-0 h-[25px] flex rounded-b-[3px] border border-t-0 border-[#1c2c40] overflow-hidden">
        <div className="w-[38px] flex items-end justify-center pb-[6px] bg-gradient-to-b from-[#7088a0] to-[#3a5878] border-r border-[#9ab]">
          <span className="block w-[16px] h-[4px] bg-white" />
        </div>
        <div className="w-[36px] flex items-center justify-center bg-gradient-to-b from-[#7088a0] to-[#3a5878] border-r border-[#9ab]">
          <svg viewBox="0 0 18 18" className="w-[18px] h-[18px]" fill="none" stroke="#fff" strokeWidth="2"><path d="M6 5V2h10v10h-3M2 6h11v10H2z" /></svg>
        </div>
        <div className="w-[63px] flex items-center justify-center bg-gradient-to-b from-[#d88a78] to-[#b83a28]">
          <svg viewBox="0 0 18 18" className="w-[20px] h-[18px]" stroke="#fff" strokeWidth="4"><path d="M3 2l12 14M15 2L3 16" /></svg>
        </div>
      </div>
    </div>
  );
}

const MENU = ['File', 'Edit', 'View', 'Insert', 'Format', 'Drawing', 'Window', 'Help'];

function MenuBar() {
  return (
    <div className="h-[30px] flex items-center bg-gradient-to-b from-[#ffffff] via-[#e4e7f2] to-[#dadeea] border-b border-[#b0b0b0] relative">
      <svg viewBox="0 0 20 16" className="w-[20px] h-[16px] ml-[6px] shrink-0">
        <rect width="20" height="16" fill="#101010" />
        <path d="M2 11l3-3 2 2 3-6 3 4 2-3 3 3" fill="none" stroke="#30c030" strokeWidth="1.2" />
        <rect y="13" width="20" height="3" fill="#701818" />
      </svg>
      <div className="ml-[8px] flex gap-[14px] text-[14px] text-[#101010]">
        {MENU.map((m) => (
          <span key={m}>{m}</span>
        ))}
      </div>
      <div className="absolute right-[1px] top-[1px] flex gap-px">
        <MdiButton glyph={GMin} />
        <MdiButton glyph={GRest} />
        <MdiButton glyph={GClose} />
      </div>
    </div>
  );
}

const TABS = [
  { t: 'STOX_TF60', w: 87, c: 'w-[87px]' },
  { t: 'STOX_TF120', w: 96, c: 'w-[96px]' },
  { t: 'STOX TF240', w: 92, c: 'w-[92px]' },
  { t: 'STOX _100', w: 84, c: 'w-[84px]' },
  { t: 'STOX_TF30', w: 87, c: 'w-[87px]' },
  { t: 'FIB_TF60', w: 76, c: 'w-[76px]' },
  { t: 'FIB_TF120', w: 83, c: 'w-[83px]' },
  { t: 'FIB TF240', w: 75, c: 'w-[75px]' },
  { t: 'FIB_100', w: 72, c: 'w-[72px]' },
  { t: 'FIB_TF30', w: 73, c: 'w-[73px]' },
  { t: 'BUND vs STOXX', w: 112, c: 'w-[112px]' },
  { t: 'FIB Frame bassi', w: 113, c: 'w-[113px]' },
  { t: 'FIB Giornaliero', w: 106, c: 'w-[106px]' },
  { t: 'STOXX frame bassi', w: 130, c: 'w-[130px] font-bold', on: true },
  { t: 'STOXX giornaliero', w: 120, c: 'w-[120px]' },
  { t: 'ANNUALE Indici', w: 108, c: 'w-[108px]' },
  { t: 'No PREZZI', w: 88, c: 'w-[88px]' },
];

const NavBtn = ({ bar, left }) => (
  <div className="w-[16px] h-[15px] flex items-center justify-center gap-px border border-[#a8a8a8] bg-[#ececec]">
    {bar && left && <span className="w-px h-[7px] bg-[#777]" />}
    {left ? (
      <span className="w-0 h-0 border-y-[4px] border-y-transparent border-r-[4px] border-r-[#777]" />
    ) : (
      <span className="w-0 h-0 border-y-[4px] border-y-transparent border-l-[4px] border-l-[#777]" />
    )}
    {bar && !left && <span className="w-px h-[7px] bg-[#777]" />}
  </div>
);

function TabStrip() {
  return (
    <div className="h-[18px] flex items-start bg-[#f0f0f0] relative">
      <div className="ml-[2px] w-[68px] flex shrink-0">
        <NavBtn bar left />
        <NavBtn left />
        <NavBtn />
        <NavBtn bar />
      </div>
      {TABS.map((tab) => (
        <div key={tab.t} className={`relative h-[16px] flex items-center justify-center text-[12.5px] text-black shrink-0 ${tab.c}`}>
          <svg viewBox={`0 0 ${tab.w} 16`} className="absolute inset-0 w-full h-full overflow-visible">
            <path d={`M0 0L5 15.500H${tab.w}L${tab.w + 5} 0`} fill={tab.on ? '#fff' : '#f4f4f4'} stroke="#222" strokeWidth="1" />
          </svg>
          <span className="relative pl-[3px]">{tab.t}</span>
        </div>
      ))}
      <div className="absolute left-[1355px] right-0 top-0 h-px bg-[#222]" />
    </div>
  );
}

const CELLS = [
  { t: 'Acct:', c: 'w-[53px]' },
  { t: 'Open Psns:', c: 'w-[91px]' },
  { t: 'DT BP:', c: 'w-[62px]' },
  { t: 'Purch Pwr:', c: 'w-[88px]' },
  { t: 'Closed P/L:', c: 'w-[94px]' },
  { t: 'RT TE:', c: 'w-[60px]' },
  { t: 'Open P/L:', c: 'w-[83px]' },
  { t: 'ORDER BAR', c: 'w-[88px] text-[#1a8a1a]' },
  { t: 'MACROS', c: 'w-[68px] text-[#0a9a60]' },
];

function StatusBar() {
  return (
    <div className="h-[20px] flex items-center bg-[#f0f0f0] text-[14px] text-[#202020] whitespace-nowrap">
      <span className="w-[1090px] pl-[2px] shrink-0">For Help, press F1</span>
      {CELLS.map((c) => (
        <span key={c.t} className={`h-full flex items-center pl-[5px] border-r border-[#dcdcdc] shrink-0 ${c.c}`}>
          {c.t}
        </span>
      ))}
      <span className="w-[19px] h-full flex items-center justify-center border-r border-[#dcdcdc] shrink-0">
        <span className="w-[10px] h-[10px] rounded-full bg-[radial-gradient(circle_at_35%_30%,#ff9090,#e00000_55%,#800000)]" />
      </span>
      <span className="pl-[5px]">09/12/2021 15:46</span>
    </div>
  );
}

function ScrollBar() {
  return (
    <div className="h-[23px] flex items-center justify-between bg-[#f0f0f0] pl-[8px] pr-[8px] border-b border-[#e0e0e0]">
      <span className="w-0 h-0 border-y-[5px] border-y-transparent border-r-[5px] border-r-[#555]" />
      <div className="flex items-center gap-[8px]">
        <div className="w-[18px] h-[19px] flex items-center justify-center gap-px bg-[#e4e4e4] border border-[#a0a0a0]">
          <span className="w-px h-[9px] bg-[#777]" />
          <span className="w-px h-[9px] mx-px bg-[#777]" />
          <span className="w-px h-[9px] bg-[#777]" />
        </div>
        <span className="w-0 h-0 border-y-[5px] border-y-transparent border-l-[5px] border-l-[#555]" />
      </div>
    </div>
  );
}

function ChartArea() {
  return (
    <div className="h-[929px] border-x-2 border-[#8a8a8a] bg-[#020206] text-white flex flex-col font-['Liberation_Sans',sans-serif]">
      <div className="flex relative">
        <PricePlot />
        <PriceAxis />
        <Legend items={LEG1} h="h-[23px]" />
        <div className="absolute right-[-8px] top-[8px] flex gap-px">
          <MdiButton glyph={GMin} />
          <MdiButton glyph={GRest} />
          <MdiButton glyph={GClose} />
        </div>
      </div>
      <div className="flex relative">
        <MacdPlot />
        <MacdAxis />
        <Legend items={LEG2} h="h-[21px]" />
      </div>
      <div className="flex relative">
        <CciPlot />
        <CciAxis />
        <Legend items={LEG3} h="h-[21px]" />
      </div>
      <TimeAxis />
    </div>
  );
}

export default function App() {
  return (
    <div className="w-[1920px] h-[1080px] overflow-hidden flex flex-col bg-[#f0f0f0] font-['Noto_Sans',sans-serif]">
      <TitleBar />
      <MenuBar />
      <Toolbar />
      <ChartArea />
      <ScrollBar />
      <TabStrip />
      <StatusBar />
      <div className="h-px bg-[#b0c0d0]" />
    </div>
  );
}
